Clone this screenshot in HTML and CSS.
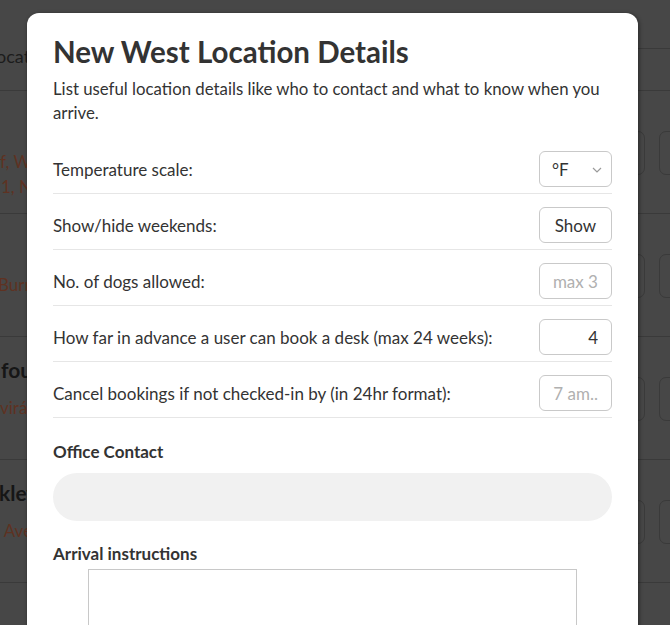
FILE: index.html
```html
<!DOCTYPE html>
<html lang="en">
<head>
<meta charset="utf-8">
<title>New West Location Details</title>
<link rel="stylesheet" href="styles.css">
</head>
<body>
<div class="page">
  <header class="page-head">
    <div class="head-left"><span class="head-label">ocation</span></div>
    <div class="head-right"><div class="toolbar"></div></div>
  </header>
  <div class="loc-row">
    <div class="loc-text">
      <div class="loc-name">&nbsp;</div>
      <div class="loc-addr">f, Westminster</div>
      <div class="loc-addr shift1">1, New Westminster</div>
    </div>
    <div class="loc-actions"><span class="act"></span><span class="act"></span></div>
  </div>
  <div class="loc-row">
    <div class="loc-text">
      <div class="loc-name">&nbsp;</div>
      <div class="loc-addr shift3">Burrard Street</div>
    </div>
    <div class="loc-actions"><span class="act"></span><span class="act"></span></div>
  </div>
  <div class="loc-row">
    <div class="loc-text">
      <div class="loc-name shift2">fourth</div>
      <div class="loc-addr">virá Street</div>
    </div>
    <div class="loc-actions"><span class="act"></span><span class="act"></span></div>
  </div>
  <div class="loc-row">
    <div class="loc-text">
      <div class="loc-name">kley</div>
      <div class="loc-addr">&nbsp;Avenue</div>
    </div>
    <div class="loc-actions"><span class="act"></span><span class="act"></span></div>
  </div>
  <div class="loc-row"></div>
</div>

<div class="modal">
  <h1 class="modal-title">New West Location Details</h1>
  <p class="modal-desc">List useful location details like who to contact and what to know when you arrive.</p>

  <div class="setting">
    <span class="setting-label">Temperature scale:</span>
    <div class="select"><span>°F</span>
      <svg class="chev" width="10" height="6" viewBox="0 0 10 6"><path d="M1 1 L5 5 L9 1" fill="none" stroke="#9a9a9a" stroke-width="1.2"/></svg>
    </div>
  </div>
  <div class="setting">
    <span class="setting-label">Show/hide weekends:</span>
    <button class="ctrl btn">Show</button>
  </div>
  <div class="setting">
    <span class="setting-label">No. of dogs allowed:</span>
    <input class="ctrl num" type="text" placeholder="max 3">
  </div>
  <div class="setting">
    <span class="setting-label">How far in advance a user can book a desk (max 24 weeks):</span>
    <input class="ctrl num" type="text" value="4">
  </div>
  <div class="setting">
    <span class="setting-label">Cancel bookings if not checked-in by (in 24hr format):</span>
    <input class="ctrl num" type="text" placeholder="7 am..">
  </div>

  <h2 class="field-label first">Office Contact</h2>
  <div class="pill-input"></div>
  <h2 class="field-label second">Arrival instructions</h2>
  <div class="textarea"></div>
</div>
</body>
</html>
```
FILE: styles.css
```css
html, body {
  margin: 0;
  padding: 0;
}
body {
  width: 670px;
  height: 625px;
  overflow: hidden;
  background: #474747;
  font-family: Lato, "Noto Sans", sans-serif;
  position: relative;
}

/* background page (dimmed) */
.page {
  width: 670px;
}
.page-head {
  height: 90px;
  border-bottom: 1px solid #3a3a3a;
  display: flex;
}
.head-left {
  width: 31px;
  flex: none;
  overflow: hidden;
  white-space: nowrap;
  padding-top: 45px;
  margin-left: -4px;
}
.head-label {
  font-size: 18px;
  color: #1c1c1c;
}
.head-right {
  flex: 1;
}
.toolbar {
  height: 48px;
  border-bottom: 1px solid #3a3a3a;
}
.loc-row {
  height: 122px;
  border-bottom: 1px solid #3a3a3a;
  display: flex;
  justify-content: space-between;
  align-items: center;
}
.loc-text {
  align-self: flex-start;
  width: 27px;
  overflow: hidden;
  padding-top: 20px;
  white-space: nowrap;
}
.loc-name {
  font-size: 21px;
  font-weight: 700;
  line-height: 26px;
  color: #161616;
  margin-left: -1px;
}
.loc-name.shift2 { margin-left: 1px; }
.loc-addr {
  font-size: 17px;
  line-height: 25px;
  color: #5e3222;
}
.loc-text .loc-name + .loc-addr {
  margin-top: 12px;
}
.loc-addr.shift1 { margin-left: 1px; }
.loc-addr.shift3 { margin-left: -2px; }
.loc-actions {
  display: flex;
  gap: 14px;
  margin-right: -34px;
  margin-top: 2px;
}
.act {
  display: block;
  width: 43px;
  height: 42px;
  border: 1px solid #3a3a3a;
  border-radius: 7px;
}

/* modal */
.modal {
  position: absolute;
  left: 27px;
  top: 13px;
  width: 559px;
  height: 640px;
  padding: 22px 26px 0;
  background: #fff;
  border-radius: 12px 12px 0 0;
  box-shadow: 1px 1px 4px rgba(0,0,0,0.45);
  color: #333;
}
.modal-title {
  margin: 0;
  font-size: 29.5px;
  line-height: 34px;
  font-weight: 700;
  color: #333;
}
.modal-desc {
  margin: 8px 0 0;
  font-size: 16.8px;
  line-height: 24px;
  color: #333;
}
.setting {
  display: flex;
  justify-content: space-between;
  align-items: center;
  padding: 13px 0 6px;
  border-bottom: 1px solid #e6e6e6;
}
.modal-desc + .setting {
  margin-top: 13px;
}
.setting-label {
  font-size: 17px;
  color: #333;
}
.select, .ctrl {
  box-sizing: border-box;
  width: 73px;
  height: 36px;
  border: 1px solid #c9c9c9;
  border-radius: 6px;
  background: #fff;
  font-family: Lato, "Noto Sans", sans-serif;
  font-size: 17px;
  color: #333;
  margin: 0;
}
.select {
  display: flex;
  align-items: center;
  justify-content: space-between;
  padding: 0 9px 0 12px;
}
.chev {
  display: block;
  margin-top: 1px;
}
.btn {
  padding: 0;
  text-align: center;
  cursor: pointer;
}
.num {
  padding: 0 13px 0 8px;
  text-align: right;
  outline: none;
}
.num::placeholder {
  color: #b0b0b0;
}
.field-label {
  margin: 0;
  font-size: 17px;
  line-height: 24px;
  font-weight: 700;
  color: #333;
}
.field-label.first { margin-top: 22px; }
.field-label.second { margin-top: 21px; }
.pill-input {
  margin-top: 9px;
  height: 48px;
  border-radius: 24px;
  background: #f1f1f1;
}
.textarea {
  margin: 3px 0 0 35px;
  width: 487px;
  height: 120px;
  border: 1px solid #c8c8c8;
}
```
